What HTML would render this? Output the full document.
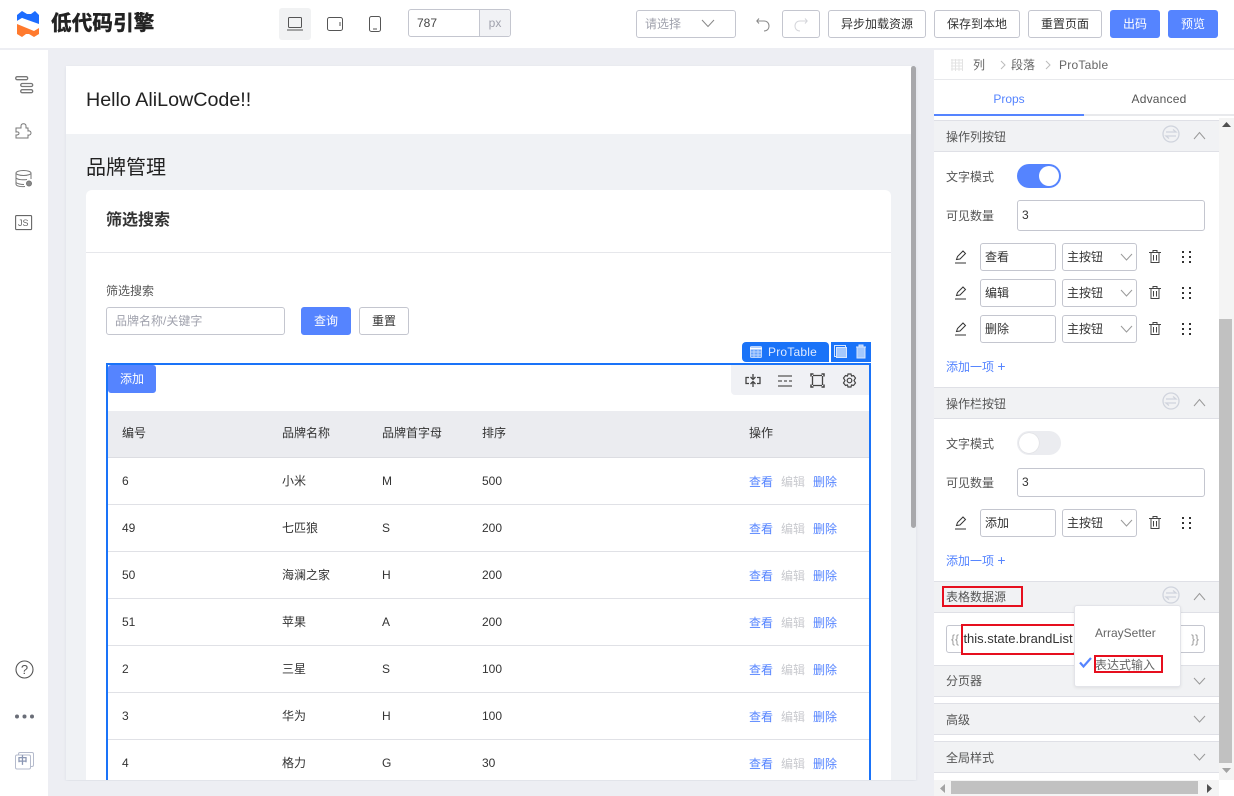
<!DOCTYPE html>
<html lang="zh"><head><meta charset="utf-8"><title>低代码引擎</title>
<style>
*{box-sizing:border-box}
html,body{margin:0;padding:0}
body{width:1234px;height:796px;overflow:hidden;position:relative;background:#edeef3;font-family:"Liberation Sans","Noto Sans CJK SC",sans-serif;font-size:12px;color:#333}
.a{position:absolute;white-space:nowrap}
.b{position:absolute;border:1px solid #c4c6cf;border-radius:3px;background:#fff;text-align:center;white-space:nowrap;color:#333}
.p{background:#5584ff;border-color:#5584ff;color:#fff}
.cell{position:absolute;white-space:nowrap;line-height:18px;color:#333}
.line{position:absolute;left:108px;width:761px;height:1px;background:#e0e1e6}
.sec{position:absolute;left:934px;width:285px;background:#f1f2f4;border-top:1px solid #dfe0e6;border-bottom:1px solid #dfe0e6;color:#555;line-height:18px}
.inp{position:absolute;height:28px;border:1px solid #c4c6cf;border-radius:3px;background:#fff;line-height:26px;padding-left:4px;color:#333;white-space:nowrap}
.red{position:absolute;border:2px solid #e60f1e}
svg{position:absolute;overflow:visible}
.t{color:#555;position:absolute;white-space:nowrap;line-height:18px}
.add{position:absolute;color:#5584ff;white-space:nowrap;line-height:18px;left:946px}
.add span{font-size:14px}
</style></head><body>

<!-- TOP BAR -->
<div class="a" style="left:0;top:0;width:1234px;height:48px;background:#fff"></div>
<svg style="left:17px;top:11px" width="23" height="26" viewBox="0 0 23 26"><path d="M0 4L5 0L10 3H14L18 0L22 4V14L5 7L0 10Z" fill="#1d6dff"/><path d="M0 10L5 7L22 13V17L17 20L0 13Z" fill="#fff"/><path d="M0 13L17 20L22 17V23L17 26L12 23H9L5 26L0 23Z" fill="#ff7a2e"/></svg>
<div class="a" style="left:51px;top:9px;font-size:20.500px;font-weight:bold;color:#222;line-height:29px;letter-spacing:.2px;-webkit-text-stroke:.5px #222">低代码引擎</div>

<div class="a" style="left:279px;top:8px;width:32px;height:32px;background:#f1f2f3;border-radius:3px"></div>
<svg style="left:287px;top:17px" width="16" height="14" fill="none" stroke="#555"><rect x="1.500" y=".5" width="13" height="10" rx="1"/><path d="M0 13H16"/></svg>
<svg style="left:327px;top:17px" width="16" height="14" fill="none" stroke="#555"><rect x=".5" y=".5" width="15" height="13" rx="2"/><path d="M13 5V9"/></svg>
<svg style="left:369px;top:16px" width="12" height="16" fill="none" stroke="#555"><rect x=".5" y=".5" width="11" height="15" rx="2"/><path d="M4 13H8"/></svg>

<div class="a" style="left:408px;top:9px;width:103px;height:28px;border:1px solid #c4c6cf;border-radius:3px;background:#fff;line-height:26px;padding-left:8px;color:#444">787</div>
<div class="a" style="left:479px;top:10px;width:31px;height:26px;background:#f1f2f5;border-left:1px solid #c4c6cf;border-radius:0 3px 3px 0;text-align:center;line-height:26px;color:#a0a2ad">px</div>

<div class="b" style="left:636px;top:10px;width:100px;height:28px;line-height:26px;text-align:left;padding-left:8px;color:#a0a2ad">请选择</div>
<svg style="left:701px;top:19px" width="14" height="9" fill="none" stroke="#888"><path d="M1 1L7 7.500L13 1"/></svg>
<svg style="left:756px;top:18px" width="15" height="14" fill="none" stroke="#888"><path d="M1 3H8C11 3 13 5 13 8C13 11 11 13 8 13M3 .5L.8 3L3 5.500"/></svg>
<div class="b" style="left:782px;top:10px;width:38px;height:28px"></div>
<svg style="left:793px;top:18px" width="15" height="14" fill="none" stroke="#d4d5da"><path d="M14 3H7C4 3 2 5 2 8C2 11 4 13 7 13M12 .5L14.200 3L12 5.500"/></svg>
<div class="b" style="left:828px;top:10px;width:98px;height:28px;line-height:26px">异步加载资源</div>
<div class="b" style="left:934px;top:10px;width:86px;height:28px;line-height:26px">保存到本地</div>
<div class="b" style="left:1028px;top:10px;width:74px;height:28px;line-height:26px">重置页面</div>
<div class="b p" style="left:1110px;top:10px;width:50px;height:28px;line-height:26px">出码</div>
<div class="b p" style="left:1168px;top:10px;width:50px;height:28px;line-height:26px">预览</div>

<!-- LEFT BAR -->
<div class="a" style="left:0;top:50px;width:48px;height:746px;background:#fff"></div>
<svg style="left:15px;top:76px" width="19" height="18" fill="none" stroke="#777" stroke-width="1.300"><rect x=".7" y=".7" width="12" height="3" rx="1.500"/><rect x="5.700" y="7.500" width="12" height="3" rx="1.500"/><rect x="5.700" y="13.700" width="12" height="3" rx="1.500"/></svg>
<svg style="left:15px;top:123px" width="18" height="18" fill="none" stroke="#777" stroke-width="1"><path d="M1 5H6V3C6 0 11 0 11 3V5H13V8C17 7 17 13 13 12V15H1V12C5 12.500 5 8 1 9Z"/></svg>
<svg style="left:15px;top:170px" width="19" height="18" fill="none" stroke="#777" stroke-width="1"><ellipse cx="8.500" cy="3" rx="7.500" ry="2.500"/><path d="M1 3V14C1 16 5 17 10 16.500M16 3V9M1 8C3 10 9 10 12 9.500M1 12.500C3 14 6 14.500 9 14.500"/><circle cx="14" cy="13.500" r="2.500" fill="#888"/></svg>
<svg style="left:15px;top:215px" width="18" height="16" fill="none" stroke="#666" stroke-width="1.100"><rect x=".6" y=".6" width="16" height="14" rx="1"/></svg>
<div class="a" style="left:18px;top:217px;font-size:9px;line-height:12px;color:#666">JS</div>
<svg style="left:15px;top:660px" width="19" height="19" fill="none" stroke="#555" stroke-width="1.100"><circle cx="9.500" cy="9.500" r="8.500"/></svg>
<div class="a" style="left:15px;top:660px;width:19px;text-align:center;font-size:13px;line-height:19px;color:#555">?</div>
<svg style="left:14px;top:713px" width="22" height="7" fill="#6a6e78"><circle cx="3" cy="3.500" r="2"/><circle cx="10.500" cy="3.500" r="2"/><circle cx="18" cy="3.500" r="2"/></svg>
<svg style="left:15px;top:752px" width="19" height="18" fill="#fff" stroke="#b5bbcc"><rect x="3.500" y=".5" width="15" height="14" rx="1.500"/><rect x=".5" y="3" width="15" height="14" rx="1.500"/></svg>
<div class="a" style="left:16px;top:755px;width:13px;text-align:center;font-size:10px;font-weight:bold;line-height:13px;color:#8a96b3">中</div>

<!-- CANVAS -->
<div class="a" style="left:66px;top:66px;width:850px;height:714px;background:#f0f2f5;box-shadow:0 1px 3px rgba(31,56,88,.08)"></div>
<div class="a" style="left:66px;top:66px;width:845px;height:68px;background:#fff"></div>
<div class="a" style="left:86px;top:88px;font-size:19.700px;line-height:24px;color:#222">Hello AliLowCode!!</div>
<div class="a" style="left:911px;top:66px;width:5px;height:462px;background:#a8a8ab;border-radius:3px"></div>
<div class="a" style="left:86px;top:155px;font-size:20px;line-height:27px;color:#222">品牌管理</div>
<div class="a" style="left:86px;top:190px;width:805px;height:590px;background:#fff;border-radius:6px 6px 0 0"></div>
<div class="a" style="left:106px;top:210px;font-size:16px;font-weight:bold;line-height:22px;color:#333">筛选搜索</div>
<div class="a" style="left:86px;top:252px;width:805px;height:1px;background:#e6e7eb"></div>
<div class="a" style="left:106px;top:282px;line-height:18px;color:#555">筛选搜索</div>
<div class="b" style="left:106px;top:307px;width:179px;height:28px;line-height:26px;text-align:left;padding-left:8px;color:#a0a2ad">品牌名称/关键字</div>
<div class="b p" style="left:301px;top:307px;width:50px;height:28px;line-height:26px">查询</div>
<div class="b" style="left:359px;top:307px;width:50px;height:28px;line-height:26px">重置</div>

<!-- selected table -->
<div class="a" style="left:106px;top:363px;width:765px;height:417px;border:2px solid #1a73f8;border-bottom:0"></div>
<div class="b p" style="left:108px;top:365px;width:48px;height:28px;line-height:26px">添加</div>
<div class="a" style="left:731px;top:365px;width:138px;height:30px;background:#f0f1f5;border-radius:0 0 0 4px"></div>
<svg style="left:745px;top:373px" width="16" height="15" fill="none" stroke="#444" stroke-width="1.300"><path d="M4 4.500H1V10.500H4M12 4.500H15V10.500H12M8 1V6M5.500 4L8 6.500L10.500 4M8 14V9M5.500 11L8 8.500L10.500 11"/></svg>
<svg style="left:778px;top:375px" width="15" height="12" fill="none" stroke="#555" stroke-width="1.300"><path d="M0 1H14M0 6H4M6 6H9M11 6H14M0 11H14"/></svg>
<svg style="left:810px;top:373px" width="15" height="15" fill="none" stroke="#444" stroke-width="1.300"><path d="M3 2.500H12M3 12.500H12M2.500 3V12M12.500 3V12"/><path d="M1 3.500V1H3.500M11.500 1H14V3.500M14 11.500V14H11.500M3.500 14H1V11.500" stroke-width="1.500"/></svg>
<svg style="left:842px;top:373px" width="15" height="15" fill="none" stroke="#444" stroke-width="1.200"><path d="M6 1H9L9.500 3L11.500 2.500L13.500 5L12 7.500L13.500 10L11.500 12.500L9.500 12L9 14H6L5.500 12L3.500 12.500L1.500 10L3 7.500L1.500 5L3.500 2.500L5.500 3Z"/><circle cx="7.500" cy="7.500" r="2.300"/></svg>

<div class="a" style="left:742px;top:342px;width:87px;height:20px;background:#1a73f8;border-radius:4px 4px 0 4px"></div>
<svg style="left:750px;top:346px" width="12" height="12" fill="none" stroke="#bcd5fd"><rect x=".5" y=".5" width="11" height="11" rx="1" fill="#6aa3fb"/><path d="M0 2.500H12" stroke="#fff" stroke-width="2"/><path d="M0 6H12M0 9H12M4 3V12M8 3V12"/></svg>
<div class="a" style="left:768px;top:343px;line-height:18px;color:#dfeaff;font-weight:500;letter-spacing:.2px">ProTable</div>
<div class="a" style="left:831px;top:342px;width:40px;height:20px;background:#1a73f8"></div>
<svg style="left:834px;top:345px" width="15" height="15" fill="none" stroke="#d7e6fe"><rect x=".5" y=".5" width="11" height="11"/><rect x="2.500" y="2.500" width="10" height="10" fill="#a5c8fc"/></svg>
<svg style="left:855px;top:344px" width="12" height="15" fill="#a5c8fc" stroke="#d7e6fe"><path d="M1 3H11M4 3V1H8V3M2 3V14H10V3Z"/></svg>

<div class="a" style="left:108px;top:411px;width:761px;height:47px;background:#ebecf0;border-bottom:1px solid #dcdde2"></div>
<div class="cell" style="left:122px;top:424px">编号</div>
<div class="cell" style="left:282px;top:424px">品牌名称</div>
<div class="cell" style="left:382px;top:424px">品牌首字母</div>
<div class="cell" style="left:482px;top:424px">排序</div>
<div class="cell" style="left:749px;top:424px">操作</div>

<div class="cell" style="left:122px;top:472px">6</div><div class="cell" style="left:282px;top:472px">小米</div><div class="cell" style="left:382px;top:472px">M</div><div class="cell" style="left:482px;top:472px">500</div>
<div class="cell" style="left:749px;top:473px;color:#5584ff">查看</div><div class="cell" style="left:781px;top:473px;color:#c8c9ce">编辑</div><div class="cell" style="left:813px;top:473px;color:#5584ff">删除</div>
<div class="line" style="top:504px"></div>

<div class="cell" style="left:122px;top:519px">49</div><div class="cell" style="left:282px;top:519px">七匹狼</div><div class="cell" style="left:382px;top:519px">S</div><div class="cell" style="left:482px;top:519px">200</div>
<div class="cell" style="left:749px;top:520px;color:#5584ff">查看</div><div class="cell" style="left:781px;top:520px;color:#c8c9ce">编辑</div><div class="cell" style="left:813px;top:520px;color:#5584ff">删除</div>
<div class="line" style="top:551px"></div>

<div class="cell" style="left:122px;top:566px">50</div><div class="cell" style="left:282px;top:566px">海澜之家</div><div class="cell" style="left:382px;top:566px">H</div><div class="cell" style="left:482px;top:566px">200</div>
<div class="cell" style="left:749px;top:567px;color:#5584ff">查看</div><div class="cell" style="left:781px;top:567px;color:#c8c9ce">编辑</div><div class="cell" style="left:813px;top:567px;color:#5584ff">删除</div>
<div class="line" style="top:598px"></div>

<div class="cell" style="left:122px;top:613px">51</div><div class="cell" style="left:282px;top:613px">苹果</div><div class="cell" style="left:382px;top:613px">A</div><div class="cell" style="left:482px;top:613px">200</div>
<div class="cell" style="left:749px;top:614px;color:#5584ff">查看</div><div class="cell" style="left:781px;top:614px;color:#c8c9ce">编辑</div><div class="cell" style="left:813px;top:614px;color:#5584ff">删除</div>
<div class="line" style="top:645px"></div>

<div class="cell" style="left:122px;top:660px">2</div><div class="cell" style="left:282px;top:660px">三星</div><div class="cell" style="left:382px;top:660px">S</div><div class="cell" style="left:482px;top:660px">100</div>
<div class="cell" style="left:749px;top:661px;color:#5584ff">查看</div><div class="cell" style="left:781px;top:661px;color:#c8c9ce">编辑</div><div class="cell" style="left:813px;top:661px;color:#5584ff">删除</div>
<div class="line" style="top:692px"></div>

<div class="cell" style="left:122px;top:707px">3</div><div class="cell" style="left:282px;top:707px">华为</div><div class="cell" style="left:382px;top:707px">H</div><div class="cell" style="left:482px;top:707px">100</div>
<div class="cell" style="left:749px;top:708px;color:#5584ff">查看</div><div class="cell" style="left:781px;top:708px;color:#c8c9ce">编辑</div><div class="cell" style="left:813px;top:708px;color:#5584ff">删除</div>
<div class="line" style="top:739px"></div>

<div class="cell" style="left:122px;top:754px">4</div><div class="cell" style="left:282px;top:754px">格力</div><div class="cell" style="left:382px;top:754px">G</div><div class="cell" style="left:482px;top:754px">30</div>
<div class="cell" style="left:749px;top:755px;color:#5584ff">查看</div><div class="cell" style="left:781px;top:755px;color:#c8c9ce">编辑</div><div class="cell" style="left:813px;top:755px;color:#5584ff">删除</div>

<!-- bottom cover -->
<div class="a" style="left:48px;top:781px;width:886px;height:15px;background:#edeef3"></div>

<!-- RIGHT PANEL -->
<div class="a" style="left:934px;top:50px;width:300px;height:746px;background:#fff"></div>
<svg style="left:951px;top:59px" width="13" height="12" fill="none" stroke="#e3e3e3"><path d="M0 1H12M0 4H12M0 7H12M0 10H12M1 0V12M4.500 0V12M8 0V12M11.500 0V12"/></svg>
<div class="a" style="left:973px;top:56px;line-height:18px;color:#666">列</div>
<svg style="left:1000px;top:60px" width="6" height="10" fill="none" stroke="#bbb"><path d="M1 1L5 5L1 9"/></svg>
<div class="a" style="left:1011px;top:56px;line-height:18px;color:#666">段落</div>
<svg style="left:1045px;top:60px" width="6" height="10" fill="none" stroke="#bbb"><path d="M1 1L5 5L1 9"/></svg>
<div class="a" style="left:1059px;top:56px;line-height:18px;color:#666;letter-spacing:.25px">ProTable</div>
<div class="a" style="left:934px;top:79px;width:300px;height:1px;background:#e8e9ec"></div>
<div class="a" style="left:934px;top:114px;width:300px;height:2px;background:#e8e9ec"></div>
<div class="a" style="left:934px;top:114px;width:150px;height:2px;background:#5584ff"></div>
<div class="a" style="left:934px;top:90px;width:150px;text-align:center;line-height:18px;color:#5584ff">Props</div>
<div class="a" style="left:1084px;top:90px;width:150px;text-align:center;line-height:18px;color:#555;letter-spacing:.2px">Advanced</div>

<!-- Panel scrollbar -->
<div class="a" style="left:1219px;top:118px;width:15px;height:662px;background:#f4f4f4"></div>
<div class="a" style="left:1219px;top:319px;width:13px;height:444px;background:#c1c1c1"></div>
<svg style="left:1222px;top:122px" width="9" height="5" fill="#505050"><path d="M0 5L4.500 0L9 5Z"/></svg>
<svg style="left:1222px;top:768px" width="9" height="5" fill="#a3a3a3"><path d="M0 0L4.500 5L9 0Z"/></svg>

<!-- Section 1 -->
<div class="sec" style="top:120px;height:32px"></div>
<div class="t" style="left:946px;top:128px">操作列按钮</div>
<svg style="left:1162px;top:125px" width="18" height="18" fill="none" stroke="#d0d4dd" stroke-width="1.300"><circle cx="9" cy="9" r="8"/><path d="M4 7H14L11 4.500M14 11H4L7 13.500"/></svg>
<svg style="left:1193px;top:131px" width="13" height="9" fill="none" stroke="#999"><path d="M1 8L6.500 1.500L12 8"/></svg>

<div class="t" style="left:946px;top:168px">文字模式</div>
<div class="a" style="left:1017px;top:164px;width:44px;height:24px;background:#5584ff;border-radius:12px"></div>
<div class="a" style="left:1039px;top:166px;width:20px;height:20px;background:#fff;border-radius:50%"></div>
<div class="t" style="left:946px;top:207px">可见数量</div>
<div class="inp" style="left:1017px;top:200px;width:188px;height:31px;line-height:29px">3</div>

<div class="inp" style="left:980px;top:243px;width:76px">查看</div>
<div class="inp" style="left:1062px;top:243px;width:75px">主按钮</div>
<div class="inp" style="left:980px;top:279px;width:76px">编辑</div>
<div class="inp" style="left:1062px;top:279px;width:75px">主按钮</div>
<div class="inp" style="left:980px;top:315px;width:76px">删除</div>
<div class="inp" style="left:1062px;top:315px;width:75px">主按钮</div>

<svg width="0" height="0" style="left:0;top:0"><defs>
<g id="pen" fill="none" stroke="#333"><path d="M1.500 9.500L2.500 6.500L8 1L10.500 3.500L5 9L1.500 9.500Z"/><path d="M0 13H11"/></g>
<g id="chev" fill="none" stroke="#999"><path d="M1 1L6.500 7L12 1"/></g>
<g id="tr" fill="none" stroke="#444"><path d="M0 2.500H12M4 2.500V.5H8V2.500M2 2.500V12.500H10V2.500M4.500 5V10.500M7.500 5V10.500"/></g>
<g id="dr" fill="#333"><rect x="0" y="0" width="2" height="2"/><rect x="7" y="0" width="2" height="2"/><rect x="0" y="5" width="2" height="2"/><rect x="7" y="5" width="2" height="2"/><rect x="0" y="10" width="2" height="2"/><rect x="7" y="10" width="2" height="2"/></g>
</defs></svg>

<svg style="left:955px;top:250px" width="12" height="14"><use href="#pen"/></svg>
<svg style="left:1120px;top:253px" width="13" height="9"><use href="#chev"/></svg>
<svg style="left:1149px;top:250px" width="12" height="13"><use href="#tr"/></svg>
<svg style="left:1182px;top:251px" width="9" height="12"><use href="#dr"/></svg>

<svg style="left:955px;top:286px" width="12" height="14"><use href="#pen"/></svg>
<svg style="left:1120px;top:289px" width="13" height="9"><use href="#chev"/></svg>
<svg style="left:1149px;top:286px" width="12" height="13"><use href="#tr"/></svg>
<svg style="left:1182px;top:287px" width="9" height="12"><use href="#dr"/></svg>

<svg style="left:955px;top:322px" width="12" height="14"><use href="#pen"/></svg>
<svg style="left:1120px;top:325px" width="13" height="9"><use href="#chev"/></svg>
<svg style="left:1149px;top:322px" width="12" height="13"><use href="#tr"/></svg>
<svg style="left:1182px;top:323px" width="9" height="12"><use href="#dr"/></svg>

<div class="add" style="top:357px">添加一项 <span>+</span></div>

<!-- Section 2 -->
<div class="sec" style="top:387px;height:32px"></div>
<div class="t" style="left:946px;top:395px">操作栏按钮</div>
<svg style="left:1162px;top:392px" width="18" height="18" fill="none" stroke="#d0d4dd" stroke-width="1.300"><circle cx="9" cy="9" r="8"/><path d="M4 7H14L11 4.500M14 11H4L7 13.500"/></svg>
<svg style="left:1193px;top:398px" width="13" height="9" fill="none" stroke="#999"><path d="M1 8L6.500 1.500L12 8"/></svg>
<div class="t" style="left:946px;top:435px">文字模式</div>
<div class="a" style="left:1017px;top:431px;width:44px;height:24px;background:#ebecf0;border-radius:12px"></div>
<div class="a" style="left:1019px;top:433px;width:20px;height:20px;background:#fff;border-radius:50%;box-shadow:0 0 1px rgba(0,0,0,.2)"></div>
<div class="t" style="left:946px;top:474px">可见数量</div>
<div class="inp" style="left:1017px;top:468px;width:188px;height:29px;line-height:27px">3</div>
<div class="inp" style="left:980px;top:509px;width:76px">添加</div>
<div class="inp" style="left:1062px;top:509px;width:75px">主按钮</div>
<svg style="left:955px;top:516px" width="12" height="14"><use href="#pen"/></svg>
<svg style="left:1120px;top:519px" width="13" height="9"><use href="#chev"/></svg>
<svg style="left:1149px;top:516px" width="12" height="13"><use href="#tr"/></svg>
<svg style="left:1182px;top:517px" width="9" height="12"><use href="#dr"/></svg>
<div class="add" style="top:551px">添加一项 <span>+</span></div>

<!-- Section 3 -->
<div class="sec" style="top:581px;height:32px"></div>
<div class="t" style="left:946px;top:588px">表格数据源</div>
<div class="red" style="left:942px;top:586px;width:81px;height:21px"></div>
<svg style="left:1162px;top:586px" width="18" height="18" fill="none" stroke="#d0d4dd" stroke-width="1.300"><circle cx="9" cy="9" r="8"/><path d="M4 7H14L11 4.500M14 11H4L7 13.500"/></svg>
<svg style="left:1193px;top:592px" width="13" height="9" fill="none" stroke="#999"><path d="M1 8L6.500 1.500L12 8"/></svg>

<div class="inp" style="left:946px;top:625px;width:259px;padding-left:4px;color:#999">{{</div>
<div class="a" style="left:1191px;top:626px;line-height:26px;color:#999">}}</div>
<div class="a" style="left:963px;top:624px;width:110px;height:30px;line-height:30px;background:#fff;text-align:center;color:#333;font-size:13px">this.state.brandList</div>
<div class="red" style="left:961px;top:624px;width:115px;height:31px"></div>

<div class="sec" style="top:665px;height:32px"></div>
<div class="t" style="left:946px;top:672px">分页器</div>
<svg style="left:1193px;top:677px" width="13" height="9"><use href="#chev"/></svg>
<div class="sec" style="top:703px;height:32px"></div>
<div class="t" style="left:946px;top:711px">高级</div>
<svg style="left:1193px;top:715px" width="13" height="9"><use href="#chev"/></svg>
<div class="sec" style="top:741px;height:32px"></div>
<div class="t" style="left:946px;top:749px">全局样式</div>
<svg style="left:1193px;top:753px" width="13" height="9"><use href="#chev"/></svg>

<!-- Popup -->
<div class="a" style="left:1074px;top:605px;width:107px;height:82px;background:#fff;border:1px solid #e3e4e9;border-radius:3px;box-shadow:0 1px 3px rgba(0,0,0,.08)"></div>
<div class="a" style="left:1095px;top:624px;line-height:18px;color:#666">ArraySetter</div>
<svg style="left:1079px;top:657px" width="13" height="11" fill="none" stroke="#5584ff" stroke-width="2.200"><path d="M1 5.500L4.500 9.500L12 1"/></svg>
<div class="a" style="left:1095px;top:656px;line-height:18px;color:#666">表达式输入</div>
<div class="red" style="left:1094px;top:655px;width:69px;height:18px"></div>

<!-- Bottom scrollbar -->
<div class="a" style="left:934px;top:780px;width:285px;height:16px;background:#f4f4f4"></div>
<div class="a" style="left:951px;top:781px;width:247px;height:13px;background:#c1c1c1"></div>
<svg style="left:940px;top:784px" width="5" height="9" fill="#a3a3a3"><path d="M5 0L0 4.500L5 9Z"/></svg>
<svg style="left:1207px;top:784px" width="5" height="9" fill="#505050"><path d="M0 0L5 4.500L0 9Z"/></svg>
<div class="a" style="left:1219px;top:780px;width:15px;height:16px;background:#fff"></div>
</body></html>
